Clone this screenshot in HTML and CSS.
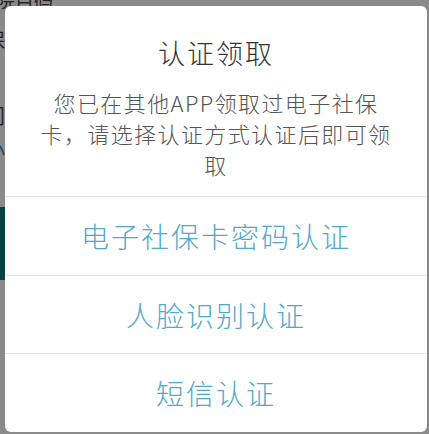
FILE: index.html
```html
<!DOCTYPE html>
<html lang="zh-CN">
<head>
<meta charset="utf-8">
<link rel="stylesheet" href="styles.css">
</head>
<body>
<div class="page">
  <div class="page-head">院目码</div>
  <div class="page-row">保</div>
  <div class="page-row gap">门</div>
  <div class="page-row link">小</div>
  <div class="page-bar"></div>
</div>
<div class="overlay">
  <div class="dialog">
    <div class="dialog-body">
      <div class="dialog-title">认证领取</div>
      <div class="dialog-msg">您已在其他APP领取过电子社保卡，请选择认证方式认证后即可领取</div>
    </div>
    <div class="dialog-btn">电子社保卡密码认证</div>
    <div class="dialog-btn">人脸识别认证</div>
    <div class="dialog-btn">短信认证</div>
  </div>
</div>
</body>
</html>
```
FILE: styles.css
```css
html, body {
  margin: 0;
  padding: 0;
}
body {
  width: 429px;
  height: 434px;
  overflow: hidden;
  background: #fff;
  font-family: "Noto Sans CJK SC", "Noto Sans", sans-serif;
  position: relative;
}
.page {
  color: #444;
  font-size: 20px;
}
.page-head {
  line-height: 20px;
  margin-top: -10px;
  margin-left: -4px;
  font-size: 19px;
}
.page-row {
  line-height: 24px;
  margin-left: -15px;
  margin-top: 18px;
}
.page-row.gap {
  margin-top: 52px;
}
.page-row.link {
  color: #2f8fd0;
  margin-top: 10px;
}
.page-bar {
  margin-top: 45px;
  width: 12px;
  height: 73px;
  background: #0f7a7a;
}
.overlay {
  position: absolute;
  inset: 0;
  background: rgba(0, 0, 0, 0.46);
  padding: 6px 2px 2px 5px;
  box-sizing: border-box;
}
.dialog {
  background: #fff;
  border-radius: 6px;
  height: 426px;
  display: flex;
  flex-direction: column;
  overflow: hidden;
}
.dialog-body {
  padding: 26px 0 16px;
  display: flex;
  flex-direction: column;
  align-items: center;
}
.dialog-title {
  font-size: 27px;
  font-weight: 300;
  line-height: 41px;
  letter-spacing: 2px;
  color: #333;
  margin-bottom: 14px;
}
.dialog-msg {
  width: 362px;
  font-size: 22px;
  font-weight: 300;
  line-height: 31px;
  letter-spacing: 1.4px;
  color: #555;
  text-align: center;
}
.dialog-btn {
  height: 78px;
  border-top: 1px solid #e2e2e2;
  display: flex;
  align-items: center;
  justify-content: center;
  font-size: 28px;
  font-weight: 300;
  letter-spacing: 2px;
  color: #52a8ca;
}
```
